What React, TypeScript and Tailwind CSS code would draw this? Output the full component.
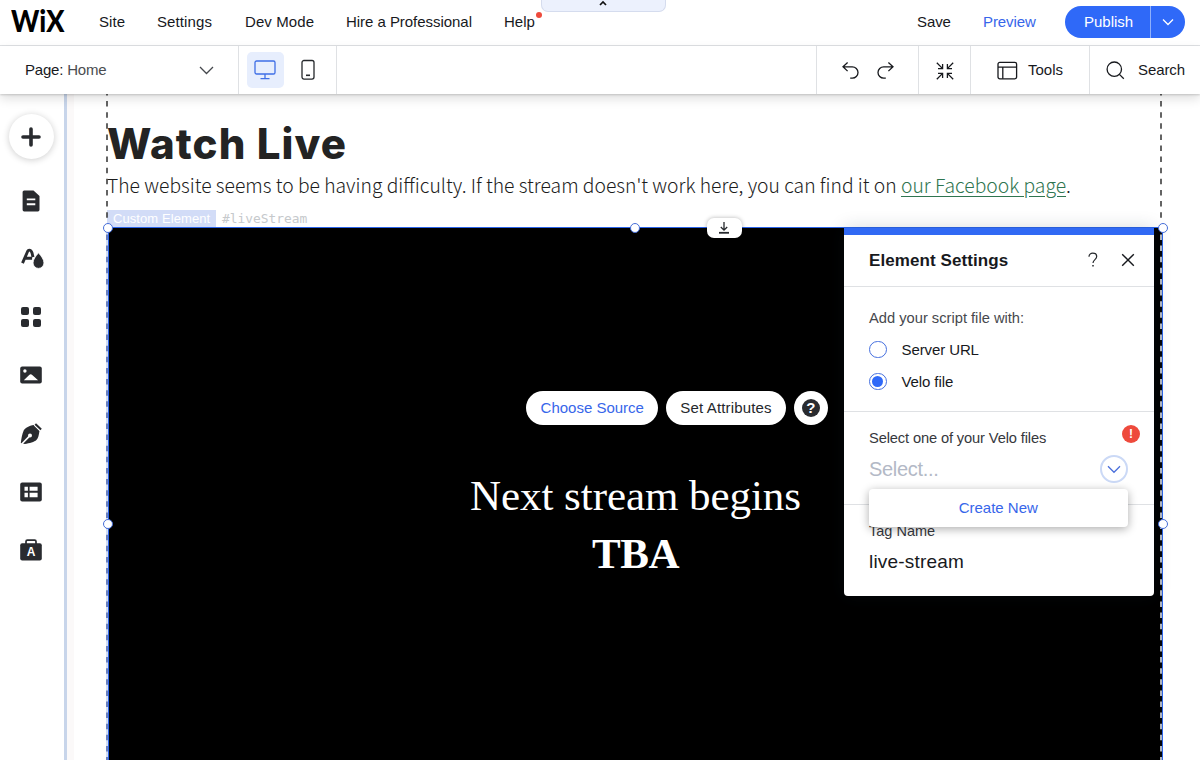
import React from 'react';

type IconProps = { children: React.ReactNode; size?: string; box: string };

function Icon({ children, size = 'size-6', box }: IconProps) {
  return (
    <svg viewBox={box} className={`${size} shrink-0`} fill="none" stroke="currentColor" strokeWidth="1.3">
      {children}
    </svg>
  );
}

function TopBar() {
  return (
    <header className="flex h-[46px] shrink-0 items-center border-b border-[#e0e2e5] bg-white pb-[2px] text-[15px] text-[#17191d]">
      <div className="w-[88px] pl-[11px]">
        <svg viewBox="0 0 58 36" className="block h-9 w-[58px]" role="img">
          <text
            x="0"
            y="28.2"
            textLength="53.5"
            lengthAdjust="spacingAndGlyphs"
            className="fill-black font-['Lato',sans-serif] text-[29.5px] font-black"
          >
            WiX
          </text>
        </svg>
      </div>
      <nav className="flex flex-1 items-center pt-[2px]">
        <span className="w-[69px] pl-[11px] tracking-[0.1px]">Site</span>
        <span className="w-[71px] tracking-[0.1px]">Settings</span>
        <span className="w-[102px] whitespace-nowrap pl-[17px] tracking-[0.1px]">Dev Mode</span>
        <span className="w-[158px] whitespace-nowrap pl-[16px] tracking-[-0.04px]">Hire a Professional</span>
        <span className="relative pl-[16px]">
          Help
          <i className="absolute -right-[7px] top-[1px] size-[6px] rounded-full bg-[#ee4a3c]" />
        </span>
      </nav>
      <span className="w-[66px] pt-[2px] tracking-[-0.1px]">Save</span>
      <span className="w-[82px] pt-[2px] tracking-[-0.1px] text-[#3766ea]">Preview</span>
      <div className="mr-[15px] flex h-8 w-[120px] items-center overflow-hidden rounded-full bg-[#2f69f8] text-white">
        <span className="w-[86px] border-r border-[#8fb0fb] pl-[19px] leading-8">Publish</span>
        <span className="flex flex-1 justify-center pr-[1px]">
          <Icon box="0 0 12 12" size="size-3">
            <path d="M1 3.5 6 8.5 11 3.5" />
          </Icon>
        </span>
      </div>
    </header>
  );
}

function ToolBar() {
  return (
    <div className="relative z-10 flex h-[48px] shrink-0 items-center bg-white text-[15px] text-[#17191d] shadow-[0_1px_2px_rgba(0,0,0,0.16),0_5px_10px_rgba(0,0,0,0.12)]">
      <div className="flex h-full w-[239px] items-center justify-between border-r border-[#dfe1e4] pl-[25px] pr-[24px]">
        <span className="tracking-[-0.2px]">
          Page: <span className="text-[#4a4c50]">Home</span>
        </span>
        <svg viewBox="0 0 15 15" className="size-[15px]" fill="none" stroke="#45484d" strokeWidth="1.3">
          <path d="M1 4 7.5 10.5 14 4" />
        </svg>
      </div>
      <div className="flex h-full w-[98px] items-center border-r border-[#dfe1e4] pl-[8px]">
        <span className="flex h-[36px] w-[37px] items-center justify-center rounded-[5px] bg-[#e7eefd] pr-[1px] text-[#3f6fe6]">
          <Icon box="0 0 22 20" size="h-5 w-[22px]">
            <rect x="1" y="1" width="20" height="13" rx="1.6" />
            <path d="M11 14v4.5M6.5 18.6h9" />
          </Icon>
        </span>
        <span className="ml-[17px] text-[#25282c]">
          <Icon box="0 0 14 22" size="h-[22px] w-[14px]">
            <rect x="1" y="1.5" width="12" height="18.6" rx="2" />
            <path d="M5 16.3h4" strokeWidth="1.6" />
          </Icon>
        </span>
      </div>
      <div className="flex-1" />
      <div className="flex h-full w-[103px] items-center gap-[16px] border-x border-[#dfe1e4] pl-[24px] pt-px">
        <Icon box="0 0 19 19" size="size-[19px]">
          <path d="M6.6 1.5 2 5.8l4.6 4.3M2 5.8h9.3a5.6 5.6 0 0 1 0 11.4H9.2" />
        </Icon>
        <Icon box="0 0 19 19" size="size-[19px]">
          <path d="m12.4 1.5 4.6 4.3-4.6 4.3M17 5.8H7.7a5.6 5.6 0 0 0 0 11.4h2.1" />
        </Icon>
      </div>
      <div className="flex h-full w-[52px] items-center justify-center border-r border-[#dfe1e4] pl-px pt-[2px]">
        <Icon box="0 0 18 18" size="size-[18px]">
          <path d="M.8.8l5.6 5.6M6.6 2v4.6H2M17.2.8l-5.6 5.6M11.4 2v4.6H16M.8 17.2l5.6-5.6M6.6 16v-4.6H2M17.2 17.2l-5.6-5.6M11.4 16v-4.6H16" />
        </Icon>
      </div>
      <div className="flex h-full w-[119px] items-center border-r border-[#dfe1e4] pl-[26px]">
        <Icon box="0 0 21 19" size="h-[19px] w-[21px]">
          <rect x="1" y="1.4" width="18.6" height="16.4" rx="1.8" />
          <path d="M1 6.2h18.6M5.8 6.2v11.6" />
        </Icon>
        <span className="ml-[10px]">Tools</span>
      </div>
      <div className="flex h-full w-[110px] items-center pl-[16px]">
        <Icon box="0 0 19 19" size="size-[19px]">
          <circle cx="8.3" cy="8.2" r="7.2" />
          <path d="m13.4 13.4 4.4 4.4" />
        </Icon>
        <span className="ml-[13px] tracking-[-0.08px]">Search</span>
      </div>
    </div>
  );
}

function Slot({ children }: { children: React.ReactNode }) {
  return <div className="flex h-[58.2px] w-full shrink-0 items-center justify-center">{children}</div>;
}

function SideBar() {
  return (
    <aside className="flex w-[67px] shrink-0 flex-col items-center border-r-[3px] border-[#c8d5ea] bg-white pr-[2px] pt-[13.5px] text-[#292b2f]">
      <Slot>
        <span className="flex size-[45px] items-center justify-center rounded-full bg-white shadow-[0_1px_7px_rgba(0,0,0,0.2)]">
          <svg viewBox="0 0 20 20" className="size-5" stroke="currentColor" strokeWidth="3.6" strokeLinecap="round">
            <path d="M10 2v16M2 10h16" />
          </svg>
        </span>
      </Slot>
      <div className="h-[6px] shrink-0" />
      <Slot>
        <svg viewBox="0 0 18 22" className="h-[22px] w-[18px]" fill="currentColor">
          <path d="M2.2.5h9.3L17.5 6v13.8a1.6 1.6 0 0 1-1.6 1.6H2.2A1.6 1.6 0 0 1 .6 19.8V2.1A1.6 1.6 0 0 1 2.2.5Z" />
          <path d="M4.8 9.4h8.5M4.8 14.2h8.5" stroke="#fff" strokeWidth="1.9" />
        </svg>
      </Slot>
      <Slot>
        <svg viewBox="0 0 24 22" className="ml-[3px] h-[22px] w-6" fill="none" stroke="currentColor">
          <path d="M1.5 15.2 6.8 3c.3-.7.8-.9 1.4-.9 1.2 0 2.3 1 2.8 2.8l1 4.2M4.1 10.3h7" strokeWidth="2.9" />
          <path d="M17.5 4.7c3 3.8 5.5 6.7 5.5 10.2a5.5 5.5 0 0 1-11 0c0-3.5 2.5-6.400 5.5-10.2Z" fill="currentColor" stroke="#fff" strokeWidth=".9" />
        </svg>
      </Slot>
      <Slot>
        <span className="grid grid-cols-2 gap-[4px]">
          <i className="size-2 rounded-[2px] bg-[#292b2f]" />
          <i className="size-2 rounded-[2px] bg-[#292b2f]" />
          <i className="size-2 rounded-[2px] bg-[#292b2f]" />
          <i className="size-2 rounded-[2px] bg-[#292b2f]" />
        </span>
      </Slot>
      <Slot>
        <svg viewBox="0 0 22 18" className="h-[18px] w-[22px]" fill="currentColor">
          <rect x=".2" y=".4" width="21.6" height="17.2" rx="2" />
          <circle cx="4.9" cy="5" r="1.7" fill="#fff" />
          <path d="m3.8 14.3 5.4-5.4a2.2 2.2 0 0 1 3 0l5.9 5.4Z" fill="#fff" />
        </svg>
      </Slot>
      <Slot>
        <svg viewBox="0 0 22 22" className="size-[22px]" fill="currentColor">
          <path d="M.8 20C1.3 16 2 11.5 3.7 7.5 4.5 5.7 9 2.7 14 2.1l5.5 5.7c-.6 4.5-1.3 7.6-3.1 9.3C14.6 19 9.3 20.5 4.8 21Z" />
          <path d="M1.8 21 9.2 13.4" stroke="#fff" strokeWidth="1.6" />
          <circle cx="10" cy="12.4" r="2" fill="#fff" />
          <path d="m14.2 2 5.700 5.600" stroke="#fff" strokeWidth="1.2" />
          <path d="m15.300.9 5.800 5.500" stroke="currentColor" strokeWidth="2.1" />
        </svg>
      </Slot>
      <Slot>
        <svg viewBox="0 0 22 20" className="h-5 w-[22px]" fill="currentColor">
          <rect x=".2" y=".5" width="21.6" height="19" rx="2" />
          <path d="M4.5 4.8h3.4v4H4.5zM9.6 4.8h8v4h-8zM4.5 10.8h3.4v4.4H4.5zM9.6 10.8h8v4.4h-8z" fill="#fff" />
        </svg>
      </Slot>
      <Slot>
        <svg viewBox="0 0 22 22" className="size-[22px]" fill="currentColor">
          <rect x=".2" y="4.2" width="21.6" height="17.2" rx="2" />
          <path d="M6 5V2.6c0-.9.5-1.4 1.4-1.4h7.2c.9 0 1.4.5 1.4 1.4V5" fill="none" stroke="currentColor" strokeWidth="1.7" />
          <text x="11" y="17.2" textAnchor="middle" className="fill-white font-['Liberation_Sans',sans-serif] text-[12px] font-bold">
            A
          </text>
        </svg>
      </Slot>
    </aside>
  );
}

function Handle({ at }: { at: string }) {
  return <i className={`absolute z-10 size-[10px] rounded-full border-[1.5px] border-[#466ed8] bg-white ${at}`} />;
}

function SettingsPanel() {
  return (
    <section className="absolute left-[734.5px] top-0 flex h-[368px] w-[310px] flex-col rounded-[4px] bg-white text-[15px] text-[#17191d] shadow-[0_0_18px_rgba(22,45,61,0.18)]">
      <div className="h-[6.5px] shrink-0 bg-[#3069f4]" />
      <div className="flex h-[52.5px] shrink-0 items-center border-b border-[#dfe1e4] pl-[25.5px] pr-[19px]">
        <h2 className="flex-1 pt-px text-[17px] font-bold tracking-[0.08px]">Element Settings</h2>
        <svg viewBox="0 0 10 16" className="mr-[23px] h-4 w-[10px]" fill="none" stroke="#25282c" strokeWidth="1.2">
          <path d="M1 4.7C1 2.5 2.6 1.2 4.8 1.2S8.7 2.5 8.7 4.5c0 3-3.7 3.2-3.7 6.5" />
          <path d="M5 12.9v1.7" strokeWidth="1.5" />
        </svg>
        <svg viewBox="0 0 14 14" className="size-[14px]" stroke="#17191d" strokeWidth="1.4">
          <path d="m1.2 1.2 11.6 11.6M12.8 1.2 1.2 12.8" />
        </svg>
      </div>
      <div className="flex h-[125px] shrink-0 flex-col border-b border-[#dfe1e4] pl-[25.5px] pt-[20.5px]">
        <p className="text-[14.7px] leading-5 text-[#46484d]">Add your script file with:</p>
        <label className="mt-[12px] flex h-5 items-center gap-[15px]">
          <i className="size-[17.5px] rounded-full border border-[#456fdf]" />
          <span className="pt-px tracking-[-0.1px]">Server URL</span>
        </label>
        <label className="mt-[12px] flex h-5 items-center gap-[15px]">
          <i className="flex size-[17.5px] items-center justify-center rounded-full border border-[#456fdf]">
            <b className="size-[11px] rounded-full bg-[#2f69f8]" />
          </i>
          <span className="pt-px tracking-[-0.1px]">Velo file</span>
        </label>
      </div>
      <div className="relative flex h-[92.5px] shrink-0 flex-col border-b border-[#dfe1e4] pl-[25.5px] pr-[26px] pt-[13.5px]">
        <p className="text-[14.7px] leading-6 tracking-[-0.14px] text-[#36383d]">Select one of your Velo files</p>
        <div className="mt-[5px] flex h-[28px] items-center justify-between">
          <span className="text-[20px] tracking-[-0.3px] text-[#b3b9c6]">Select...</span>
          <span className="flex size-[28px] items-center justify-center rounded-full border-2 border-[#cbd9f6] text-[#4a6fdb]">
            <Icon box="0 0 14 14" size="size-[14px]">
              <path d="M1 4.3 7 10.3 13 4.3" />
            </Icon>
          </span>
        </div>
        <span className="absolute right-[13.5px] top-[13px] flex size-[18px] items-center justify-center rounded-full bg-[#ee4a3c] text-[12px] font-bold text-white">
          !
        </span>
        <div className="absolute left-[25.5px] top-[77px] flex h-[38px] w-[258.5px] items-center justify-center rounded-[4px] bg-white pt-px text-[#3766ea] shadow-[0_2px_10px_rgba(0,0,0,0.33)]">
          Create New
        </div>
      </div>
      <div className="flex flex-col pl-[25.5px] pt-[16px]">
        <p className="text-[14.5px] leading-5 text-[#36383d]">Tag Name</p>
        <p className="mt-[7px] text-[19px] leading-7 tracking-[0.2px]">live-stream</p>
      </div>
    </section>
  );
}

function EmbeddedStream() {
  return (
    <div className="relative flex w-[1055px] flex-1 flex-col items-center border-x border-t border-[#2c64e8] bg-black text-white">
      <div className="mt-[162.5px] flex items-center gap-[7.5px] pl-[83px] text-[15px]">
        <button className="h-[34px] w-[132px] rounded-full bg-white pt-px text-[#3766ea]">Choose Source</button>
        <button className="h-[34px] w-[120.5px] rounded-full bg-white pt-px tracking-[0.15px] text-[#25282c]">Set Attributes</button>
        <button className="flex size-[34px] items-center justify-center rounded-full bg-white">
          <span className="flex size-[18px] items-center justify-center rounded-full bg-[#292b2f] text-[15px] font-bold leading-none">?</span>
        </button>
      </div>
      <div className="mt-[42px] text-center font-['Liberation_Serif',serif] text-[43px] leading-[58px]">
        <p className="tracking-[-0.06px]">Next stream begins</p>
        <p className="font-bold tracking-[-0.4px]">TBA</p>
      </div>
      <SettingsPanel />
      <Handle at="-left-[6.5px] -top-[5.5px]" />
      <Handle at="left-[520.5px] -top-[5.5px]" />
      <Handle at="-right-[5.5px] -top-[5.5px]" />
      <Handle at="-left-[6.5px] top-[291px]" />
      <Handle at="-right-[5.5px] top-[291px]" />
      <span className="absolute -top-[10.5px] left-[597.5px] flex h-[20.5px] w-[35px] items-center justify-center rounded-[7px] bg-white text-[#25282c] shadow-[0_0_4px_rgba(0,0,0,0.3)]">
        <Icon box="0 0 12 12" size="size-3">
          <path d="M6 0v8M2.8 5 6 8.2 9.2 5" />
          <path d="M1 10.8h10" strokeWidth="1.8" />
        </Icon>
      </span>
    </div>
  );
}

type GuideProps = { x: string; dash: string; gap: string };

function Guide({ x, dash, gap }: GuideProps) {
  return (
    <svg className={`pointer-events-none absolute top-0 h-full w-[2px] ${x}`}>
      <path d="M1 0V129" stroke="#303030" strokeWidth="1.5" strokeDasharray="5.5 5.62" strokeDashoffset="4.1" />
      <path d="M1 138V670" stroke={gap} strokeWidth="1.5" />
      <path d="M1 138V670" stroke={dash} strokeWidth="1.5" strokeDasharray="5.5 5.62" strokeDashoffset="8.66" />
    </svg>
  );
}

function Stage() {
  return (
    <main className="relative flex flex-1 flex-col overflow-hidden border-l-[7px] border-[#fbf9f9] bg-white pl-[34px]">
      <h1 className="-ml-px mt-[24px] h-[52px] font-['Inter',sans-serif] text-[42px] font-extrabold leading-[52px] tracking-[1.1px] text-[#232323]">
        Watch Live
      </h1>
      <p className="-ml-px -mt-px h-[33px] whitespace-nowrap font-['Noto_Sans_CJK_SC',sans-serif] text-[19.3px] font-light leading-[32px] text-[#1c1c1c]">
        The website seems to be having difficulty. If the stream doesn't work here, you can find it on{' '}
        <a className="text-[#2f7550] underline underline-offset-[3px]">our Facebook page</a>.
      </p>
      <div className="-ml-px mt-[7.5px] flex h-[17.5px] items-center">
        <span className="h-full w-[108.5px] bg-[#d2dcf7] pl-[6px] text-[13px] leading-[17px] tracking-[0.08px] text-white">Custom Element</span>
        <span className="ml-[6.5px] font-['DejaVu_Sans_Mono',monospace] text-[12.9px] leading-[19px] text-[#c6c9cc]">#liveStream</span>
      </div>
      <EmbeddedStream />
      <Guide x="left-[32px]" dash="#4a63ad" gap="#c3d3f3" />
      <Guide x="left-[1086px]" dash="#e8edf8" gap="#05070c" />
    </main>
  );
}

export default function App() {
  return (
    <div className="relative flex h-[760px] w-[1200px] flex-col overflow-hidden bg-white font-['Liberation_Sans',Arial,sans-serif]">
      <TopBar />
      <ToolBar />
      <div className="flex min-h-0 flex-1">
        <SideBar />
        <Stage />
      </div>
      <div className="absolute left-[541px] top-0 flex h-3 w-[125px] justify-center rounded-b-[7px] border border-t-0 border-[#d5dcee] bg-[#ecf1fd] pr-[2px]">
        <svg viewBox="0 0 8 6" className="h-[6px] w-2" fill="none" stroke="#111" strokeWidth="1.7">
          <path d="M1 5 4 2l3 3" />
        </svg>
      </div>
    </div>
  );
}
